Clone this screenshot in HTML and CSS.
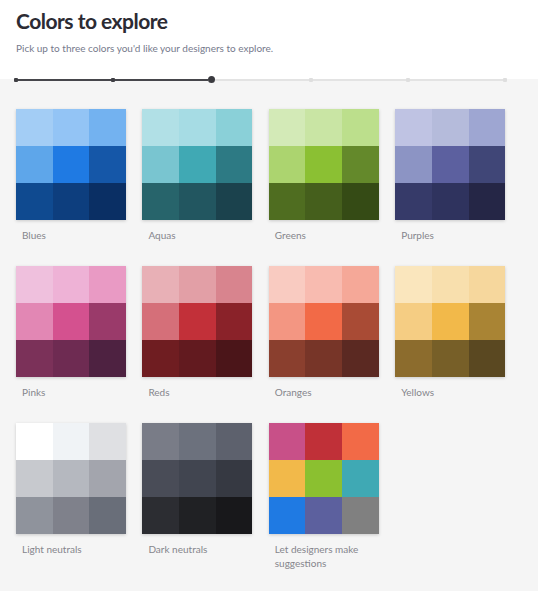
FILE: index.html
```html
<!DOCTYPE html>
<html lang="en">
<head>
<meta charset="utf-8">
<title>Colors to explore</title>
<link rel="stylesheet" href="styles.css">
</head>
<body>
<header class="head">
  <h1 class="title">Colors to explore</h1>
  <p class="subtitle">Pick up to three colors you'd like your designers to explore.</p>
</header>
<div class="progress">
  <div class="track">
    <span class="dot done"></span><span class="seg done"></span>
    <span class="dot done"></span><span class="seg done"></span>
    <span class="dot current"></span><span class="seg"></span>
    <span class="dot"></span><span class="seg"></span>
    <span class="dot"></span><span class="seg"></span>
    <span class="dot"></span>
  </div>
</div>
<main class="panel">
  <div class="grid">
    <div class="card">
      <div class="swatch">
        <i style="background:#a3cdf5"></i><i style="background:#93c4f5"></i><i style="background:#73b2f0"></i>
        <i style="background:#5ea6ea"></i><i style="background:#1f7ae3"></i><i style="background:#1557a8"></i>
        <i style="background:#0f4a90"></i><i style="background:#0d3e7e"></i><i style="background:#0a2f64"></i>
      </div>
      <div class="label">Blues</div>
    </div>
    <div class="card">
      <div class="swatch">
        <i style="background:#b1e0e6"></i><i style="background:#a6dce4"></i><i style="background:#8ad0d8"></i>
        <i style="background:#79c5d0"></i><i style="background:#40a9b4"></i><i style="background:#2d7a84"></i>
        <i style="background:#27646b"></i><i style="background:#225660"></i><i style="background:#1b424d"></i>
      </div>
      <div class="label">Aquas</div>
    </div>
    <div class="card">
      <div class="swatch">
        <i style="background:#d3eab7"></i><i style="background:#c9e5a4"></i><i style="background:#bcdf8c"></i>
        <i style="background:#acd46f"></i><i style="background:#8bc033"></i><i style="background:#64892b"></i>
        <i style="background:#4f6d20"></i><i style="background:#455f1c"></i><i style="background:#354b15"></i>
      </div>
      <div class="label">Greens</div>
    </div>
    <div class="card">
      <div class="swatch">
        <i style="background:#bfc3e3"></i><i style="background:#b5bbdb"></i><i style="background:#9ea6d2"></i>
        <i style="background:#8c94c4"></i><i style="background:#5c609f"></i><i style="background:#404677"></i>
        <i style="background:#363a69"></i><i style="background:#2f335e"></i><i style="background:#252646"></i>
      </div>
      <div class="label">Purples</div>
    </div>

    <div class="card">
      <div class="swatch">
        <i style="background:#efc0dd"></i><i style="background:#eeb2d6"></i><i style="background:#e99ac4"></i>
        <i style="background:#e287b4"></i><i style="background:#d4518f"></i><i style="background:#9a3a6a"></i>
        <i style="background:#7b3159"></i><i style="background:#6e2b52"></i><i style="background:#4e2241"></i>
      </div>
      <div class="label">Pinks</div>
    </div>
    <div class="card">
      <div class="swatch">
        <i style="background:#e8b0b6"></i><i style="background:#e29fa6"></i><i style="background:#d8848e"></i>
        <i style="background:#d56f79"></i><i style="background:#c23039"></i><i style="background:#8a2229"></i>
        <i style="background:#6f1d21"></i><i style="background:#621a1f"></i><i style="background:#4b1519"></i>
      </div>
      <div class="label">Reds</div>
    </div>
    <div class="card">
      <div class="swatch">
        <i style="background:#f9cbc1"></i><i style="background:#f8bbb0"></i><i style="background:#f5a898"></i>
        <i style="background:#f39682"></i><i style="background:#f26a47"></i><i style="background:#a94b35"></i>
        <i style="background:#8a3f2e"></i><i style="background:#773528"></i><i style="background:#5b2922"></i>
      </div>
      <div class="label">Oranges</div>
    </div>
    <div class="card">
      <div class="swatch">
        <i style="background:#fae6bd"></i><i style="background:#f8dfad"></i><i style="background:#f6d79d"></i>
        <i style="background:#f5cd83"></i><i style="background:#f2b94a"></i><i style="background:#a98434"></i>
        <i style="background:#8c6c2d"></i><i style="background:#775f28"></i><i style="background:#5a4821"></i>
      </div>
      <div class="label">Yellows</div>
    </div>

    <div class="card">
      <div class="swatch">
        <i style="background:#ffffff"></i><i style="background:#f0f3f6"></i><i style="background:#dfe0e3"></i>
        <i style="background:#c7c9ce"></i><i style="background:#b5b8bf"></i><i style="background:#a3a5ad"></i>
        <i style="background:#8f939c"></i><i style="background:#7f818b"></i><i style="background:#696e79"></i>
      </div>
      <div class="label">Light neutrals</div>
    </div>
    <div class="card">
      <div class="swatch">
        <i style="background:#797c87"></i><i style="background:#6c717d"></i><i style="background:#5d616d"></i>
        <i style="background:#494c57"></i><i style="background:#414550"></i><i style="background:#363942"></i>
        <i style="background:#2c2d32"></i><i style="background:#202124"></i><i style="background:#18181b"></i>
      </div>
      <div class="label">Dark neutrals</div>
    </div>
    <div class="card">
      <div class="swatch">
        <i style="background:#c85088"></i><i style="background:#c03038"></i><i style="background:#f26a47"></i>
        <i style="background:#f2b94a"></i><i style="background:#8bc030"></i><i style="background:#3fa9b4"></i>
        <i style="background:#1f7ae3"></i><i style="background:#5c609e"></i><i style="background:#808080"></i>
      </div>
      <div class="label">Let designers make<br>suggestions</div>
    </div>
  </div>
</main>
</body>
</html>
```
FILE: styles.css
```css
html, body {
  margin: 0;
  padding: 0;
  background: #f5f5f5;
}
body {
  font-family: Lato, "Liberation Sans", sans-serif;
  min-height: 591px;
}
.head {
  background: #ffffff;
  padding: 6px 16px 0;
}
.title {
  margin: 0;
  font-size: 21px;
  line-height: 30px;
  font-weight: 700;
  letter-spacing: -0.5px;
  color: #2c2b33;
}
.subtitle {
  margin: 5px 0 0;
  font-size: 10px;
  line-height: 14px;
  color: #767a8c;
}
.progress {
  background: linear-gradient(#ffffff calc(100% - 3.5px), #f5f5f5 calc(100% - 3.5px));
  padding: 21px 0 0 14px;
}
.track {
  display: flex;
  align-items: center;
  width: 493px;
  height: 7px;
}
.dot {
  width: 4px;
  height: 4px;
  border-radius: 1px;
  background: #dedede;
  flex: none;
}
.dot.done {
  background: #3f3f44;
}
.dot.current {
  width: 7px;
  height: 7px;
  border-radius: 50%;
  background: #3a3a3f;
}
.seg {
  flex: 1;
  height: 2px;
  background: #e3e3e3;
}
.seg.done {
  background: #46464b;
}
.panel {
  background: #f5f5f5;
  padding: 26px 16px 20px;
}
.grid {
  display: grid;
  grid-template-columns: repeat(4, 110px);
  column-gap: 16.4px;
  row-gap: 24px;
}
.swatch {
  display: grid;
  grid-template-columns: repeat(3, 1fr);
  grid-template-rows: repeat(3, 37px);
  width: 110px;
  box-shadow: 0 1px 3px rgba(0, 0, 0, 0.18);
}
.swatch i {
  display: block;
}
.label {
  margin-top: 8px;
  padding-left: 6px;
  font-size: 10px;
  line-height: 14px;
  color: #85858c;
}
```
